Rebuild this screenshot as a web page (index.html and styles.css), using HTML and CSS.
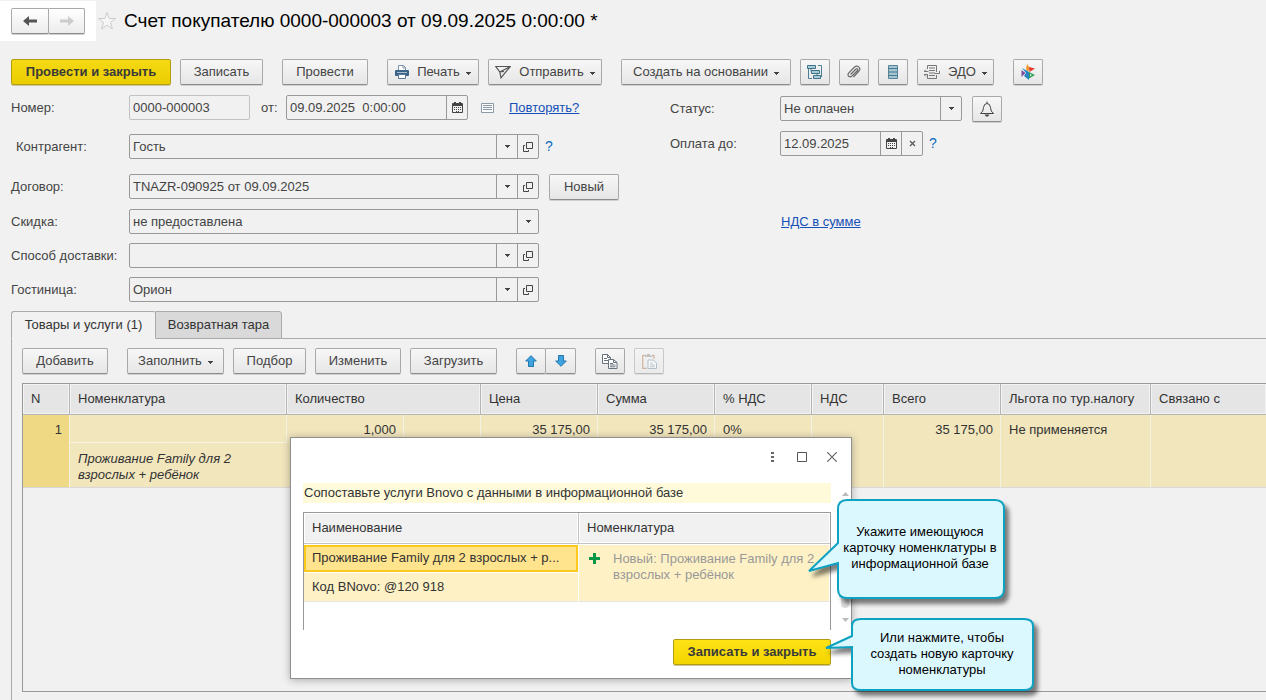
FILE: index.html
```html
<!DOCTYPE html>
<html lang="ru">
<head>
<meta charset="utf-8">
<title>Счет покупателю</title>
<link rel="stylesheet" href="styles.css">
</head>
<body>
<svg class="defs" aria-hidden="true">
  <symbol id="i-down" viewBox="0 0 5 3"><path d="M0 0h5v1H4v1H3v1H2V2H1V1H0z"/></symbol>
  <symbol id="i-open" viewBox="0 0 10 10"><path d="M3.500.5h6v6h-6zM2 3.500H.5v6h5V8" fill="none" stroke="#444"/></symbol>
  <symbol id="i-cal" viewBox="0 0 11 11"><path d="M1 1h1V0h2v1h3V0h2v1h1q1 0 1 1v8q0 1-1 1H1q-1 0-1-1V2q0-1 1-1z" fill="#444"/><path d="M1 4h9v6H1z" fill="#f1f1f1"/><path d="M2 5h1v1H2zM4 5h1v1H4zM6 5h1v1H6zM8 5h1v1H8zM2 7h1v1H2zM4 7h1v1H4zM6 7h1v1H6zM8 7h1v1H8zM4 9h1v1H4zM6 9h1v1H6z" fill="#444"/></symbol>
</svg>

<header class="title-bar">
  <nav class="history">
    <button class="btn hist" aria-label="Назад"><svg width="16" height="12" viewBox="0 0 16 12"><path d="M1 6l6-5v3.500h8v3H7V11z" fill="#555"/></svg></button>
    <button class="btn hist hist-next" aria-label="Вперед" disabled><svg width="16" height="12" viewBox="0 0 16 12"><path d="M15 6L9 1v3.500H1v3h8V11z" fill="#ccc"/></svg></button>
  </nav>
  <svg class="star" width="20" height="20" viewBox="0 0 20 20"><path d="M10 1.500l2.200 6H18.500l-5 4 1.900 6.500L10 14.200 4.600 18l1.900-6.500-5-4h6.300z" fill="#f6f6f6" stroke="#ccc"/></svg>
  <h1>Счет покупателю 0000-000003 от 09.09.2025 0:00:00 *</h1>
</header>

<div class="toolbar">
  <div class="group">
    <button class="btn primary w-160">Провести и закрыть</button>
    <button class="btn w-83">Записать</button>
  </div>
  <button class="btn w-86">Провести</button>
  <div class="group">
    <button class="btn w-92"><svg width="14" height="14" viewBox="0 0 14 14"><path d="M3.500 5V.5h5l2 2V5" fill="#fff" stroke="#7b93a8"/><path d="M8 .5V3h2.500" fill="none" stroke="#7b93a8"/><rect y="5" width="14" height="6" rx="1" fill="#3b6288"/><path d="M2 7.500h10" stroke="#a9bccd"/><path d="M3.500 9.500h7v4h-7z" fill="#fff" stroke="#57779a"/></svg>Печать<svg class="caret"><use href="#i-down"/></svg></button>
    <button class="btn w-114"><svg width="16" height="14" viewBox="0 0 16 14"><path d="M.8 1.500h14.500L6 12.800 4.800 7zM4.800 7l10.500-5.500M4.800 7L9 6.500" fill="none" stroke="#555" stroke-width="1.200"/></svg>Отправить<svg class="caret"><use href="#i-down"/></svg></button>
  </div>
  <div class="group">
    <button class="btn w-170">Создать на основании<svg class="caret"><use href="#i-down"/></svg></button>
    <button class="btn icon" aria-label="Структура подчиненности"><svg width="16" height="16" viewBox="0 0 16 16"><path d="M11 1.500h3.500V13M1.500 4v10.500H5M4 4v3.500h1M10 9v2" fill="none" stroke="#4c7f96"/><path d="M.5 1.500h8v3h-8zM4.500 6.500h8v3h-8zM6.500 11.500h7v3h-7z" fill="#a9ccd9" stroke="#3f7288"/></svg></button>
    <button class="btn icon" aria-label="Присоединенные файлы"><svg width="14" height="14" viewBox="0 0 14 14"><path d="M3.500 9.500L9 4q1-.8 1.600-.1t-.1 1.600L5 11q-1.800 1.500-3.300.2t.1-3.400L7.500 2q2.200-1.800 4.300-.1T12 6l-5.500 6" fill="none" stroke="#6b6b6b" stroke-width="1.200"/></svg></button>
    <button class="btn icon" aria-label="Реестр"><svg width="10" height="14" viewBox="0 0 10 14"><path d="M.5.500h9v13h-9z" fill="#a5c5d2" stroke="#568499"/><path d="M0 3.500h10M0 7h10M0 10.500h10" stroke="#47788e"/></svg></button>
    <button class="btn w-77"><svg width="16" height="14" viewBox="0 0 16 14"><path d="M3.500 4V.5h9V7M3.500 9v4.500h9V10M5 3h6M5 5.500h6M5 8h6M5 10.500h6M0 6.500h4.500M2 4.500l-2 2M11 8.500h4.500M15.500 6v2.500M2 11.500l-2-2h3" fill="none" stroke="#777"/></svg>ЭДО<svg class="caret"><use href="#i-down"/></svg></button>
  </div>
  <button class="btn icon" aria-label="Сервисы"><svg width="14" height="16" viewBox="0 0 14 16"><path d="M6 0l3 4-2 4-2-3z" fill="#f29a2e"/><path d="M8 3l6 1.500-5.500 3.500z" fill="#e2382f"/><path d="M.5 6l4 3-4 4z" fill="#7a4fa0"/><path d="M1 4l7 4v8l-5-4 2-3z" fill="#2583c6"/><path d="M8 8l6 3-6 3.500z" fill="#2ea05a"/><path d="M9 10l2 1-2 1z" fill="#fff"/></svg></button>
</div>

<main>
<form class="form">
  <div class="col-left">
    <div class="row">
      <label for="num">Номер:</label>
      <div class="field light w-num"><input id="num" value="0000-000003"></div>
      <label class="from" for="date">от:</label>
      <div class="field w-182"><input id="date" value="09.09.2025  0:00:00"><button type="button" aria-label="Календарь"><svg width="11" height="11"><use href="#i-cal"/></svg></button></div>
      <svg class="list-icon" width="13" height="10" viewBox="0 0 13 10"><path d="M.5.500h12v9H.5z" fill="#fbfbfb" stroke="#8a9aa8"/><path d="M2 2.500h9M2 4.500h9M2 6.500h9" stroke="#8a9aa8"/></svg>
      <a href="#">Повторять?</a>
    </div>
    <div class="row">
      <label class="indent" for="partner">Контрагент:</label>
      <div class="field wide"><input id="partner" value="Гость"><button type="button" aria-label="Выбрать"><svg width="5" height="3"><use href="#i-down"/></svg></button><button type="button" aria-label="Открыть"><svg width="10" height="10"><use href="#i-open"/></svg></button></div>
      <a class="help" href="#">?</a>
    </div>
    <div class="row">
      <label for="contract">Договор:</label>
      <div class="field wide"><input id="contract" value="TNAZR-090925 от 09.09.2025"><button type="button" aria-label="Выбрать"><svg width="5" height="3"><use href="#i-down"/></svg></button><button type="button" aria-label="Открыть"><svg width="10" height="10"><use href="#i-open"/></svg></button></div>
      <button type="button" class="btn new">Новый</button>
    </div>
    <div class="row">
      <label for="discount">Скидка:</label>
      <div class="field wide"><select id="discount"><option>не предоставлена</option></select><span class="drop"><svg width="5" height="3"><use href="#i-down"/></svg></span></div>
    </div>
    <div class="row">
      <label for="delivery">Способ доставки:</label>
      <div class="field wide"><input id="delivery" value=""><button type="button" aria-label="Выбрать"><svg width="5" height="3"><use href="#i-down"/></svg></button><button type="button" aria-label="Открыть"><svg width="10" height="10"><use href="#i-open"/></svg></button></div>
    </div>
    <div class="row">
      <label for="hotel">Гостиница:</label>
      <div class="field wide"><input id="hotel" value="Орион"><button type="button" aria-label="Выбрать"><svg width="5" height="3"><use href="#i-down"/></svg></button><button type="button" aria-label="Открыть"><svg width="10" height="10"><use href="#i-open"/></svg></button></div>
    </div>
  </div>
  <div class="col-right">
    <div class="row">
      <label for="status">Статус:</label>
      <div class="field w-182"><select id="status"><option>Не оплачен</option></select><span class="drop"><svg width="5" height="3"><use href="#i-down"/></svg></span></div>
      <button type="button" class="btn icon bell" aria-label="Напоминание"><svg width="16" height="16" viewBox="0 0 16 16"><path d="M8 .5v2M1.500 12.500q3-2 3-6Q5 2.500 8 2.500t3.500 4q0 4 3 6z" fill="none" stroke="#444"/><path d="M5.500 13.500h5L9 15.500H7z" fill="#444"/></svg></button>
    </div>
    <div class="row">
      <label for="due">Оплата до:</label>
      <div class="field w-143"><input id="due" value="12.09.2025"><button type="button" aria-label="Календарь"><svg width="11" height="11"><use href="#i-cal"/></svg></button><button type="button" aria-label="Очистить"><svg width="7" height="7" viewBox="0 0 7 7"><path d="M1 1l5 5M6 1L1 6" stroke="#555" stroke-width="1.200"/></svg></button></div>
      <a class="help" href="#">?</a>
    </div>
    <div class="row vat"><a href="#">НДС в сумме</a></div>
  </div>
</form>

<div class="tabs" role="tablist">
  <button class="tab active" role="tab" aria-selected="true">Товары и услуги (1)</button>
  <button class="tab" role="tab" aria-selected="false">Возвратная тара</button>
</div>

<section class="panel">
  <div class="toolbar items-bar">
    <button class="btn w-86">Добавить</button>
    <div class="group">
      <button class="btn w-97">Заполнить<svg class="caret"><use href="#i-down"/></svg></button>
      <button class="btn w-73">Подбор</button>
      <button class="btn w-86">Изменить</button>
      <button class="btn w-87">Загрузить</button>
    </div>
    <div class="pair">
      <button class="btn icon" aria-label="Вверх"><svg width="12" height="12" viewBox="0 0 12 12"><path d="M6 .7L11.300 6H8.500v5.500h-5V6H.7z" fill="#3fa3e0" stroke="#2377ad"/></svg></button>
      <button class="btn icon" aria-label="Вниз"><svg width="12" height="12" viewBox="0 0 12 12"><path d="M6 11.300L11.300 6H8.500V.5h-5V6H.7z" fill="#3fa3e0" stroke="#2377ad"/></svg></button>
    </div>
    <div class="group">
      <button class="btn icon" aria-label="Копировать"><svg width="16" height="15" viewBox="0 0 16 15"><path d="M.5.500h5l3 3v6h-8z" fill="#fff" stroke="#66727e"/><path d="M5.500.5v3h3M2 4.500h3M2 6.500h4" fill="none" stroke="#66727e"/><path d="M6.500 5.500h5l3.500 3v6H6.500z" fill="#fff" stroke="#66727e"/><path d="M11.500 5.500v3H15M8 9.500h3M8 11h5.500M8 12.800h5.500" fill="none" stroke="#66727e"/></svg></button>
      <button class="btn icon faded" aria-label="Вставить" disabled><svg width="15" height="15" viewBox="0 0 15 15"><path d="M4 1.500H.7v12.800H5M10 1.500h2V5" fill="none" stroke="#b98a68" stroke-width="1.300"/><path d="M3 3V1.500h2V0h3v1.500h2V3z" fill="#999"/><path d="M6 6h5l3.500 3v5.500H6z" fill="#fff" stroke="#7d99ad"/><path d="M8 9h3M8 11h5M8 12.800h5" stroke="#8fa9ba"/></svg></button>
    </div>
  </div>

  <div class="grid-wrap">
    <table class="items">
      <colgroup><col class="c47"><col class="c217"><col class="c117"><col class="c77"><col class="c117"><col class="c117"><col class="c97"><col class="c72"><col class="c117"><col class="c150"><col></colgroup>
      <thead><tr><th>N</th><th>Номенклатура</th><th colspan="2">Количество</th><th>Цена</th><th>Сумма</th><th>% НДС</th><th>НДС</th><th>Всего</th><th>Льгота по тур.налогу</th><th>Связано с</th></tr></thead>
      <tbody>
        <tr class="r1"><td rowspan="2" class="num current">1</td><td></td><td rowspan="2" class="num">1,000</td><td rowspan="2"></td><td rowspan="2" class="num">35 175,00</td><td rowspan="2" class="num">35 175,00</td><td rowspan="2">0%</td><td rowspan="2"></td><td rowspan="2" class="num">35 175,00</td><td rowspan="2">Не применяется</td><td rowspan="2"></td></tr>
        <tr class="r2"><td class="content">Проживание Family для 2 взрослых + ребёнок</td></tr>
      </tbody>
    </table>
  </div>
</section>
</main>

<div class="dialog" role="dialog" aria-label="Сопоставление услуг">
  <div class="dialog-tools">
    <button aria-label="Меню"><svg width="3" height="11" viewBox="0 0 3 11"><path d="M0 0h3v2H0zM0 4h3v2H0zM0 8h3v2H0z" fill="#666"/></svg></button>
    <button aria-label="Развернуть"><svg width="10" height="10" viewBox="0 0 10 10"><path d="M.5.500h9v9h-9z" fill="none" stroke="#555"/></svg></button>
    <button aria-label="Закрыть"><svg width="10" height="10" viewBox="0 0 10 10"><path d="M0 0l10 10M10 0L0 10" stroke="#666" stroke-width="1.200"/></svg></button>
  </div>
  <div class="dialog-body">
    <div class="dialog-main">
      <p class="notice">Сопоставьте услуги Bnovo с данными в информационной базе</p>
      <div class="match-wrap">
        <table class="match">
          <thead><tr><th class="c-name">Наименование</th><th>Номенклатура</th></tr></thead>
          <tbody>
            <tr><td class="selected"><div>Проживание Family для 2 взрослых + р...</div></td><td rowspan="2" class="new-item"><div class="new-line"><svg width="11" height="11" viewBox="0 0 11 11"><path d="M4 0h3v4h4v3H7v4H4V7H0V4h4z" fill="#0a9648"/></svg><span>Новый: Проживание Family для 2 взрослых + ребёнок</span></div></td></tr>
            <tr><td>Код BNovo: @120 918</td></tr>
          </tbody>
        </table>
      </div>
    </div>
    <div class="scroll" aria-hidden="true"><svg width="7" height="4" viewBox="0 0 7 4"><path d="M3.500 0L7 4H0z" fill="#bbb"/></svg><i></i><svg width="7" height="4" viewBox="0 0 7 4"><path d="M0 0h7L3.500 4z" fill="#bbb"/></svg></div>
  </div>
  <div class="dialog-foot"><button class="btn primary bright w-158">Записать и закрыть</button></div>
</div>

<div class="callout callout-a">
  <svg width="198" height="102" viewBox="0 0 198 102"><path d="M39 2H187q9 0 9 9V91q0 9-9 9H39q-9 0-9-9V65L1 73 30 45V11q0-9 9-9z"/></svg>
  <p>Укажите имеющуюся карточку номенклатуры в информационной базе</p>
</div>
<div class="callout callout-b">
  <svg width="210" height="75" viewBox="0 0 210 75"><path d="M36 2H199q9 0 9 7V66q0 7-9 7H36q-9 0-9-7V30L1 31 27 19V9q0-7 9-7z"/></svg>
  <p>Или нажмите, чтобы создать новую карточку номенклатуры</p>
</div>
</body>
</html>
```
FILE: styles.css
```css
* { box-sizing: border-box; }
body {
  margin: 0;
  height: 100vh;
  display: flex;
  flex-direction: column;
  position: relative;
  overflow: hidden;
  background: #f1f1f1;
  color: #444;
  font: 13px/16px "Liberation Sans", Arial, sans-serif;
}
button, input, select { font: inherit; color: inherit; }
svg { flex: none; display: block; }
.defs { position: absolute; width: 0; height: 0; }
a { color: #1650b8; }

.title-bar { display: flex; align-items: center; height: 41px; flex: none; }
.history { display: flex; align-items: center; width: 96px; height: 40px; padding-left: 11px; background: #fff; }
.hist { width: 38px; height: 24px; border-radius: 2px 0 0 2px; background: linear-gradient(#fff, #ececec); }
.hist-next { width: 37px; margin-left: -1px; border-radius: 0 2px 2px 0; border-color: #c4c4c4; }
.star { margin-left: 1px; }
h1 { margin: 0 0 0 7px; font-size: 19px; line-height: 24px; font-weight: normal; color: #000; white-space: nowrap; }

.toolbar { display: flex; gap: 19px; flex: none; padding: 18px 0 0 11px; }
.group { display: flex; gap: 9px; }
.pair { display: flex; }
.pair .btn + .btn { margin-left: -1px; width: 31px; }
.btn {
  display: flex;
  align-items: center;
  justify-content: center;
  gap: 8px;
  flex: none;
  height: 26px;
  padding: 0;
  border: 1px solid #a9a9a9;
  border-bottom-color: #8c8c8c;
  border-radius: 2px;
  background: linear-gradient(#f7f7f7, #e6e6e6);
  box-shadow: 0 1px 0 #d0d0d0;
  white-space: nowrap;
}
.btn.hist { background: linear-gradient(#fff, #ececec); }
.btn.icon { width: 30px; }
.btn.faded { opacity: .55; }
.btn.primary { background: linear-gradient(#f5d913, #ebce00); border-color: #b49c12; font-weight: bold; color: #3a3a3a; box-shadow: 0 1px 0 #cdc7a0; }
.btn.bright { background: linear-gradient(#ffe215, #f2d500); }
.caret { width: 5px; height: 3px; margin: 3px 0 0 -2px; fill: #444; }
.w-73 { width: 73px; } .w-77 { width: 77px; } .w-83 { width: 83px; }
.w-86 { width: 86px; } .w-87 { width: 87px; } .w-92 { width: 92px; } .w-97 { width: 97px; }
.w-114 { width: 114px; } .w-158 { width: 158px; } .w-160 { width: 160px; } .w-170 { width: 170px; }

main { display: flex; flex-direction: column; flex: 1; min-height: 0; }
.form { display: grid; grid-template-columns: 659px 1fr; padding: 10px 0 0 11px; }
.col-left { display: grid; grid-template-rows: 39px 40px 35px 34px 34px 34px; }
.col-right { display: grid; grid-template-rows: 35px 78px 34px; align-content: start; padding-top: 1px; }
.row { display: flex; align-items: flex-start; }
.row > a { line-height: 25px; }
.row label { width: 118px; line-height: 25px; flex: none; white-space: nowrap; }
.row .indent { padding-left: 5px; }
.row .from { width: 36px; padding-left: 11px; }
.col-right label { width: 110px; }
.field { display: flex; height: 25px; border: 1px solid #999; border-radius: 2px; }
.field.light { border-color: #c2c2c2; }
.field input, .field select { flex: 1; min-width: 0; padding: 0 3px; border: 0; background: none; outline: 0; appearance: none; white-space: pre; }
.field button, .drop { display: flex; align-items: center; justify-content: center; width: 21px; padding: 0; border: 0; border-left: 1px solid #999; background: none; fill: #444; flex: none; }
.w-num { width: 121px; } .w-143 { width: 143px; } .w-182 { width: 182px; } .wide { width: 410px; }
.list-icon { margin: 8px 15px 0 13px; }
.row .help { margin-left: 6px; color: #0f6cbd; text-decoration: none; font-size: 14px; }
.new { width: 70px; margin-left: 10px; }
.bell { margin-left: 10px; }
.vat { padding-left: 111px; }

.tabs { display: flex; padding-left: 11px; flex: none; }
.tabs::after { content: ""; flex: 1; border-bottom: 1px solid #aaa; }
.tab { height: 28px; padding: 0; border: 1px solid #aaa; border-radius: 3px 3px 0 0; background: #d9d9d9; color: #333; white-space: nowrap; }
.tab + .tab { margin-left: -1px; width: 127px; border-top-left-radius: 0; }
.tab.active { width: 145px; background: #f1f1f1; border-bottom-color: #f1f1f1; border-right-color: #f1f1f1; }
.panel { display: flex; flex-direction: column; flex: 1; min-height: 0; margin-left: 11px; padding: 9px 0 8px 10px; border-left: 1px solid #aaa; }
.items-bar { padding: 0 0 9px; }
.grid-wrap { flex: 1; min-height: 0; border: 1px solid #999; border-right: 0; }

table { border-collapse: separate; border-spacing: 0; table-layout: fixed; width: 100%; color: #333; }
th { font-weight: normal; text-align: left; }
.items th { height: 31px; padding: 0 8px; background: #e5e5e5; border-right: 1px solid #b5b5b5; border-bottom: 1px solid #b5b5b5; box-shadow: inset 0 0 0 1px #f3f3f3; white-space: nowrap; }
.items td { padding: 7px 7px 0 8px; vertical-align: top; background: #f2e6bd; border-right: 1px solid #f4f0e2; border-bottom: 1px solid #d8d8d8; }
.items th:last-child, .items td:last-child { border-right: 0; }
.items .num { text-align: right; }
.items .num.current { background: #f0d985; }
.r1 td { height: 28px; }
.r1 td:nth-child(2) { border-bottom-color: #f8f3e2; }
.items .content { height: 45px; padding-top: 8px; border-right-color: #c4c4c4; font-style: italic; }
.c47 { width: 47px; } .c72 { width: 72px; } .c77 { width: 77px; } .c97 { width: 97px; }
.c117 { width: 117px; } .c150 { width: 150px; } .c217 { width: 217px; }

.dialog { position: absolute; left: 290px; top: 437px; width: 562px; padding-left: 12px; border: 1px solid #8f8f8f; background: #fff; box-shadow: 0 1px 8px rgba(0, 0, 0, .3); }
.dialog-tools { display: flex; justify-content: flex-end; height: 45px; padding: 4px 4px 0 0; }
.dialog-tools button { display: flex; align-items: center; justify-content: center; width: 30px; height: 30px; padding: 0; border: 0; background: none; }
.dialog-body { display: flex; }
.dialog-main { width: 528px; }
.notice { margin: 0 0 9px; padding: 2px 1px; background: #fffada; color: #333; white-space: nowrap; }
.match-wrap { height: 118px; border: 1px solid #999; border-bottom: 0; }
.match th { height: 31px; padding: 0 8px; background: #f1f1f1; border-bottom: 1px solid #c4c4c4; box-shadow: inset 0 0 0 1px #fff; }
.match .c-name { width: 275px; border-right: 1px solid #c4c4c4; }
.match td { height: 30px; padding: 0 8px; background: #fef1c5; border-top: 1px solid #fff; border-right: 1px solid #fff; border-bottom: 1px solid #e4e4e4; white-space: nowrap; }
.match td.selected { height: 28px; padding: 0; border-bottom: 0; }
.selected div { height: 27px; padding: 3px 6px; border: 2px solid #fdca1c; background: #ffe48d; }
.match td.new-item { padding: 6px 8px 0 10px; vertical-align: top; white-space: normal; color: #999; }
.new-line { display: flex; gap: 13px; margin-right: -8px; }
.new-line svg { margin-top: 2px; }
.scroll { display: flex; flex-direction: column; align-items: center; width: 8px; height: 130px; margin: 9px 0 0 10px; }
.scroll i { width: 8px; flex: 1; margin: 6px 0 10px; border-radius: 4px; background: #ddd; }
.dialog-foot { display: flex; justify-content: flex-end; padding: 9px 20px 13px 0; }

.callout { position: absolute; color: #000; text-align: center; }
.callout svg { position: absolute; left: 0; top: 0; overflow: visible; fill: #dcf8ff; stroke: #0ea2c2; stroke-width: 2; filter: drop-shadow(4px 5px 2px rgba(0, 0, 0, .5)); }
.callout p { position: relative; margin: 0; }
.callout-a { left: 808px; top: 498px; width: 198px; }
.callout-a p { padding: 26px 7px 0 33px; }
.callout-b { left: 825px; top: 617px; width: 210px; }
.callout-b p { padding: 13px 18px 0 42px; }
```
